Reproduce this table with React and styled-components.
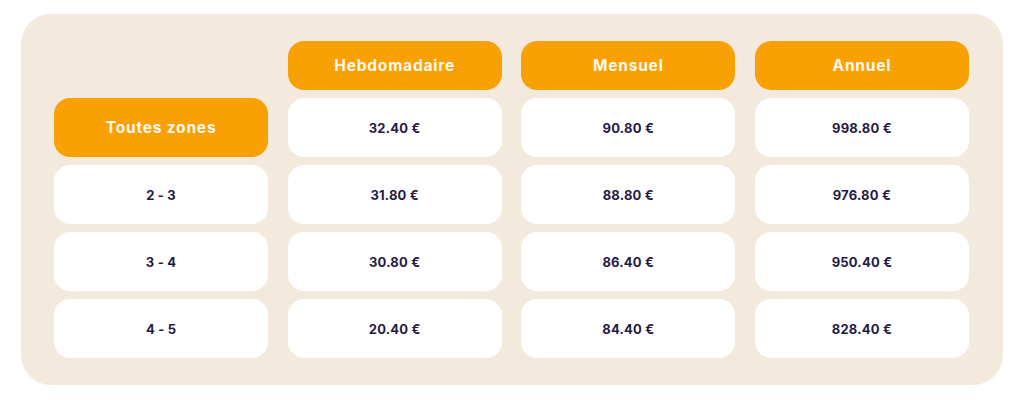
import React from "react";
import styled, { createGlobalStyle } from "styled-components";

const GlobalStyle = createGlobalStyle`
    body {
        margin: 0;
        background: #ffffff;
        font-family: "Inter", "Liberation Sans", sans-serif;
    }
`;

const Page = styled.div`
    width: 1024px;
    height: 400px;
    padding: 14px 21px 0 21px;
    box-sizing: border-box;
`;

const Panel = styled.div`
    background: #f3e9dc;
    border-radius: 30px;
    padding: 27px 34px 27px 33px;
    display: grid;
    grid-template-columns: repeat(4, 1fr);
    grid-template-rows: 49px repeat(4, 59px);
    column-gap: 19.5px;
    row-gap: 8px;
    width: 982px;
    box-sizing: border-box;
`;

const Cell = styled.div`
    display: flex;
    align-items: center;
    justify-content: center;
    border-radius: 16px;
    background: ${({ $head }) => ($head ? "#f9a104" : "#ffffff")};
    color: ${({ $head }) => ($head ? "#fff8ef" : "#261a45")};
    font-size: ${({ $head }) => ($head ? "15.5px" : "13px")};
    font-weight: 700;
    letter-spacing: ${({ $head }) => ($head ? "0.8px" : "0.2px")};
`;

const Blank = styled.div``;

const columns = ["Hebdomadaire", "Mensuel", "Annuel"];

const rows = [
    { zone: "Toutes zones", head: true, prices: ["32.40 €", "90.80 €", "998.80 €"] },
    { zone: "2 - 3", prices: ["31.80 €", "88.80 €", "976.80 €"] },
    { zone: "3 - 4", prices: ["30.80 €", "86.40 €", "950.40 €"] },
    { zone: "4 - 5", prices: ["20.40 €", "84.40 €", "828.40 €"] },
];

export default function App() {
    return (
        <Page>
            <GlobalStyle />
            <Panel>
                <Blank />
                {columns.map((c) => (
                    <Cell $head key={c}>
                        {c}
                    </Cell>
                ))}
                {rows.map((r) => (
                    <React.Fragment key={r.zone}>
                        <Cell $head={r.head}>{r.zone}</Cell>
                        {r.prices.map((p, i) => (
                            <Cell key={`${r.zone}-${i}`}>{p}</Cell>
                        ))}
                    </React.Fragment>
                ))}
            </Panel>
        </Page>
    );
}
